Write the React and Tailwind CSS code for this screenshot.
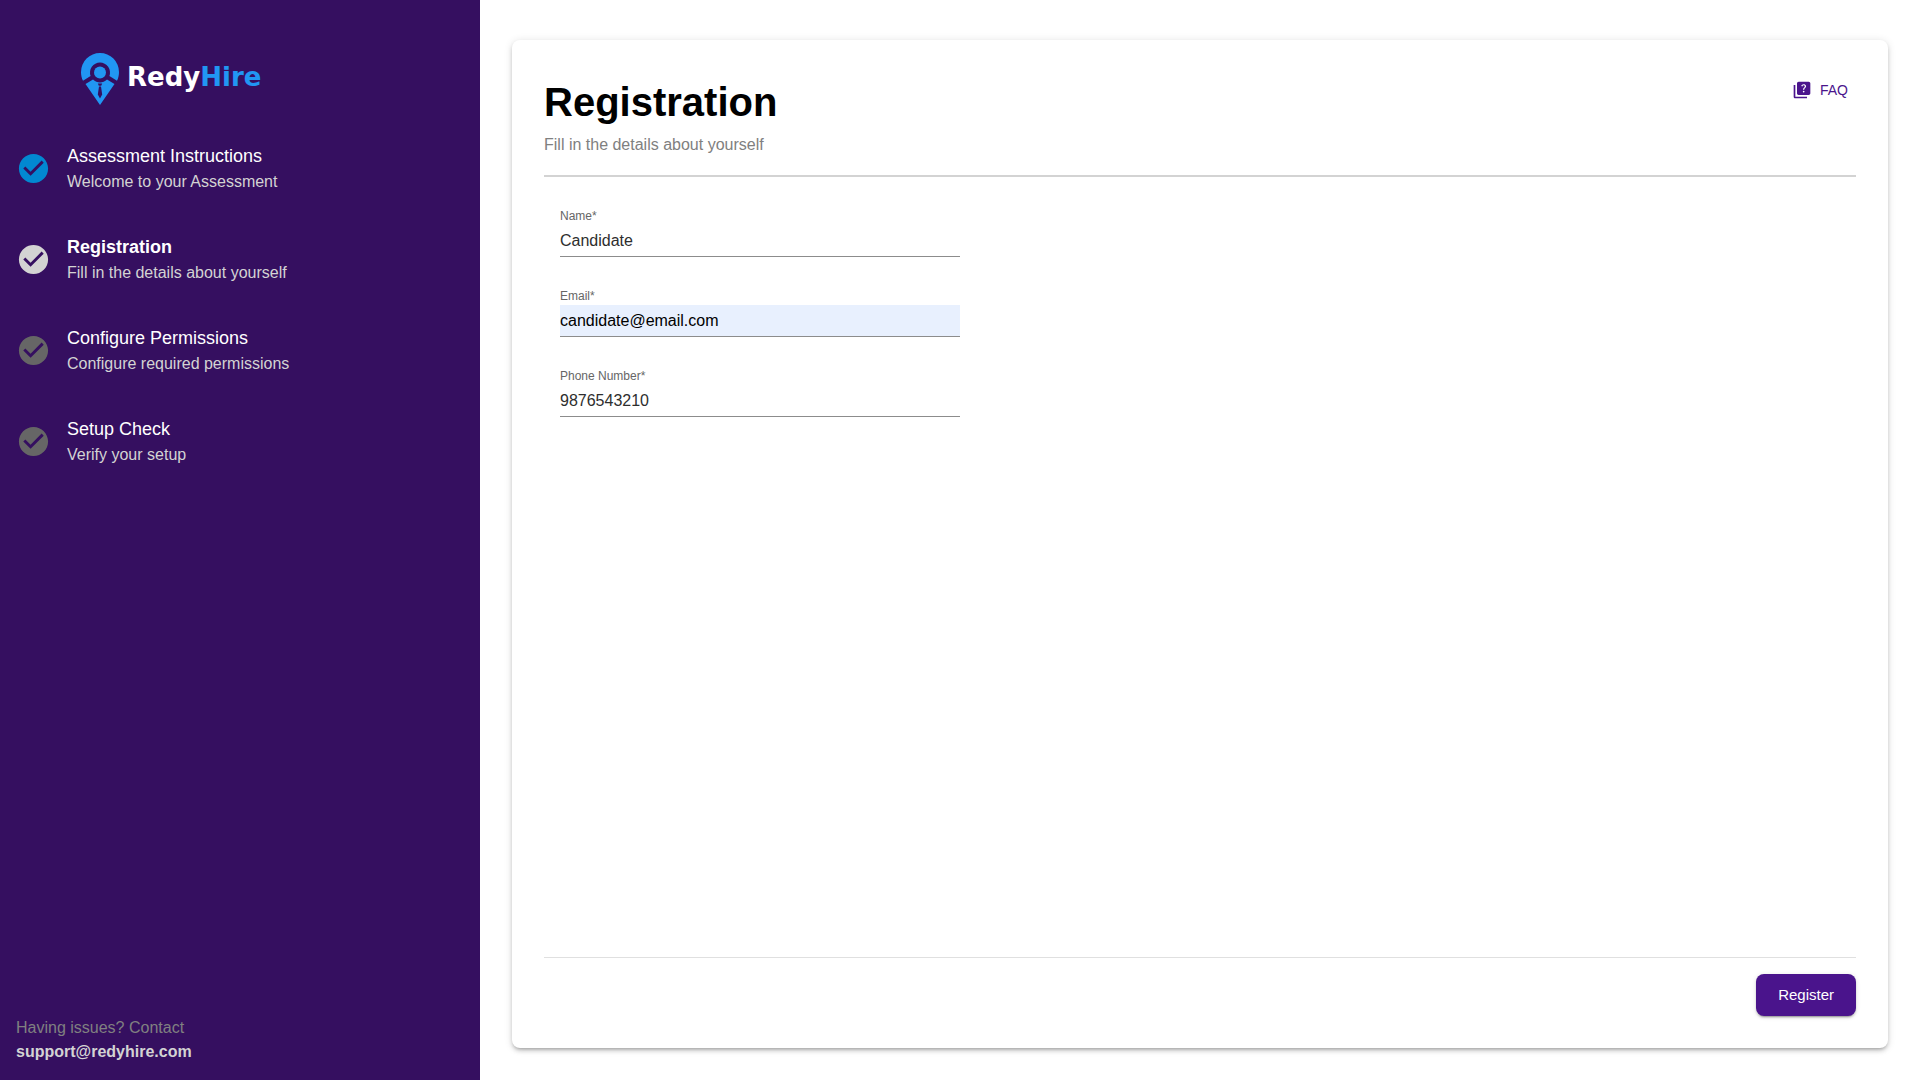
import React, { useState } from "react";
import { MdCheckCircle, MdQuiz } from "react-icons/md";

const steps = [
  {
    title: "Assessment Instructions",
    description: "Welcome to your Assessment",
    status: "done",
  },
  {
    title: "Registration",
    description: "Fill in the details about yourself",
    status: "active",
  },
  {
    title: "Configure Permissions",
    description: "Configure required permissions",
    status: "pending",
  },
  {
    title: "Setup Check",
    description: "Verify your setup",
    status: "pending",
  },
];

const iconColors = {
  done: "text-[#0288d1]",
  active: "text-[#d3d3d3]",
  pending: "text-[#666666]",
};

const Logo = () => (
  <div className="flex items-center gap-2 pl-[65px]">
    <svg className="h-[52px] w-[38px]" viewBox="0 0 38 52" aria-hidden="true">
      <path
        fill="#2196f3"
        d="M19 0A19 19 0 0 0 0 19c0 3 .6 6 2 8.800l7.600-4.800a10 10 0 1 1 18.800 0l7.600 4.800c1.400-2.800 2-5.800 2-8.800A19 19 0 0 0 19 0z"
      />
      <circle cx="19" cy="19.5" r="6" fill="#2196f3" />
      <path
        fill="#2196f3"
        d="M4.500 31l7.500-4.500c4 4 10 4 14 0l7.500 4.500L19 52z"
      />
      <path
        fill="#350f60"
        d="M16.800 30.500h4.400l-1 2.300h-2.400zM18 33.500h2l1.200 8-2.200 4-2.200-4z"
      />
    </svg>
    <span className="pb-1 font-['DejaVu_Sans',sans-serif] text-[26px] leading-8 font-bold text-white">
      Redy<span className="text-[#2196f3]">Hire</span>
    </span>
  </div>
);

const Step = ({ step }) => (
  <li className="flex items-center gap-4">
    <MdCheckCircle className={`size-[35px] shrink-0 ${iconColors[step.status]}`} />
    <div>
      <p
        className={`text-lg leading-[27px] text-white ${
          step.status === "active" ? "font-bold" : ""
        }`}
      >
        {step.title}
      </p>
      <p className="text-base leading-6 text-[#d3d3d3]">{step.description}</p>
    </div>
  </li>
);

const Field = ({ id, label, type, value, onChange, autofilled }) => (
  <div className="flex flex-col gap-0.5">
    <label htmlFor={id} className="text-xs leading-[14px] text-[#666666]">
      {label}*
    </label>
    <input
      id={id}
      type={type}
      value={value}
      onChange={onChange}
      className={`h-8 w-full border-b border-[#8c8c8c] text-base outline-none ${
        autofilled ? "bg-[#e8f0fe] text-black" : "text-[#2e2e2e]"
      }`}
    />
  </div>
);

const App = () => {
  const [form, setForm] = useState({
    name: "Candidate",
    email: "candidate@email.com",
    phone: "9876543210",
  });

  const handleChange = (key) => (e) =>
    setForm({ ...form, [key]: e.target.value });

  return (
    <div className="flex min-h-screen bg-white font-['Liberation_Sans',Arial,sans-serif]">
      <aside className="flex w-1/4 flex-col justify-between bg-[#350f60] p-4">
        <div className="pt-[37px]">
          <Logo />
          <ol className="mt-[38px] flex flex-col gap-10">
            {steps.map((step) => (
              <Step key={step.title} step={step} />
            ))}
          </ol>
        </div>
        <div className="text-base leading-6">
          <p className="text-[#808080]">Having issues? Contact</p>
          <a
            href="mailto:support@redyhire.com"
            className="block font-bold text-[#d3d3d3]"
          >
            support@redyhire.com
          </a>
        </div>
      </aside>

      <main className="flex flex-1 px-8 pt-10 pb-8">
        <form
          onSubmit={(e) => e.preventDefault()}
          className="flex flex-1 flex-col rounded-lg bg-white p-8 shadow-[0_3px_3px_-2px_rgba(0,0,0,0.2),0_3px_4px_0_rgba(0,0,0,0.14),0_1px_8px_0_rgba(0,0,0,0.12)]"
        >
          <header className="flex items-start justify-between border-b-2 border-[#d3d3d3] pb-[17px]">
            <div>
              <h1 className="text-[40px] leading-[60px] font-bold text-black">
                Registration
              </h1>
              <p className="text-base leading-[26px] text-[#808080]">
                Fill in the details about yourself
              </p>
            </div>
            <button
              type="button"
              className="flex h-9 items-center gap-2 px-2 text-sm text-[#4a148c]"
            >
              <MdQuiz className="size-5" />
              FAQ
            </button>
          </header>

          <div className="flex w-[432px] flex-1 flex-col gap-8 px-4 pt-8">
            <Field
              id="name"
              label="Name"
              type="text"
              value={form.name}
              onChange={handleChange("name")}
            />
            <Field
              id="email"
              label="Email"
              type="email"
              value={form.email}
              onChange={handleChange("email")}
              autofilled
            />
            <Field
              id="phone"
              label="Phone Number"
              type="tel"
              value={form.phone}
              onChange={handleChange("phone")}
            />
          </div>

          <footer className="flex justify-end border-t border-[#e0e0e0] pt-4">
            <button
              type="submit"
              className="h-[42px] rounded-lg bg-[#4a148c] px-[22px] text-[15px] text-white shadow-[0_3px_1px_-2px_rgba(0,0,0,0.2),0_2px_2px_0_rgba(0,0,0,0.14),0_1px_5px_0_rgba(0,0,0,0.12)]"
            >
              Register
            </button>
          </footer>
        </form>
      </main>
    </div>
  );
};

export default App;
